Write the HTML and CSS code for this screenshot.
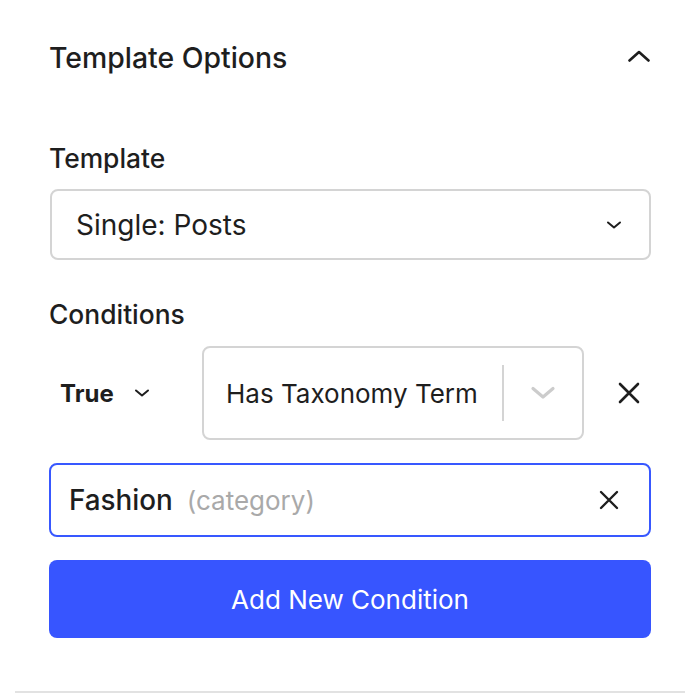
FILE: index.html
```html
<!DOCTYPE html>
<html lang="en">
<head>
<meta charset="utf-8">
<title>Template Options</title>
<link rel="stylesheet" href="styles.css">
</head>
<body>
<div class="panel">
  <div class="panel-header">
    <h2 class="panel-title">Template Options</h2>
    <svg class="chev-up" width="22" height="12" viewBox="0 0 22 12"><path d="M1.5 10.5 L11 2 L20.5 10.5" fill="none" stroke="#1e1e1e" stroke-width="2.6" stroke-linecap="round" stroke-linejoin="round"/></svg>
  </div>

  <div class="field-label label-template">Template</div>
  <div class="select">
    <span class="select-value">Single: Posts</span>
    <svg class="chev-small" width="16" height="10" viewBox="0 0 16 10"><path d="M2 2.5 L8 7.5 L14 2.5" fill="none" stroke="#1e1e1e" stroke-width="2" stroke-linecap="round" stroke-linejoin="round"/></svg>
  </div>

  <div class="field-label label-conditions">Conditions</div>
  <div class="cond-row">
    <div class="cond-bool">
      <span class="bool-text">True</span>
      <svg class="chev-small" width="16" height="10" viewBox="0 0 16 10"><path d="M2 2.5 L8 7.5 L14 2.5" fill="none" stroke="#1e1e1e" stroke-width="2" stroke-linecap="round" stroke-linejoin="round"/></svg>
    </div>
    <div class="cond-select">
      <span class="cond-value">Has Taxonomy Term</span>
      <span class="cond-sep"></span>
      <span class="cond-indicator">
        <svg width="26" height="16" viewBox="0 0 26 16"><path d="M3 3.5 L13 12 L23 3.5" fill="none" stroke="#cccccc" stroke-width="3.2" stroke-linecap="round" stroke-linejoin="round"/></svg>
      </span>
    </div>
    <svg class="cond-remove" width="22" height="22" viewBox="0 0 22 22"><path d="M2 2 L20 20 M20 2 L2 20" fill="none" stroke="#1e1e1e" stroke-width="2.6" stroke-linecap="round"/></svg>
  </div>

  <div class="term-input">
    <span class="term-name">Fashion</span>
    <span class="term-tax">(category)</span>
    <svg class="term-clear" width="20" height="20" viewBox="0 0 20 20"><path d="M2 2 L18 18 M18 2 L2 18" fill="none" stroke="#1e1e1e" stroke-width="2.4" stroke-linecap="round"/></svg>
  </div>

  <button class="add-btn">Add New Condition</button>
</div>
</body>
</html>
```

FILE: styles.css
```css
* { box-sizing: border-box; }

html, body {
  margin: 0;
  padding: 0;
  background: #ffffff;
}

body {
  font-family: Inter, "Noto Sans", "Liberation Sans", sans-serif;
  color: #1e1e1e;
}

.panel {
  margin: 0 15px;
  padding: 40px 34px 53px 34px;
  border-bottom: 2px solid #e2e2e2;
  display: flex;
  flex-direction: column;
}

.panel-header {
  display: flex;
  align-items: center;
  justify-content: space-between;
  height: 36px;
}

.panel-title {
  margin: 0;
  font-size: 28.4px;
  line-height: 36px;
  font-weight: 500;
  letter-spacing: 0;
}

.chev-up {
  margin-right: 1px;
  margin-top: -5px;
}

.field-label {
  font-size: 26.4px;
  line-height: 28px;
  font-weight: 500;
}

.label-template { margin-top: 68px; }
.label-conditions { margin-top: 40px; }

.select {
  margin-top: 17px;
  height: 71px;
  border: 2px solid #d4d4d4;
  border-radius: 8px;
  display: flex;
  align-items: center;
  justify-content: space-between;
  padding: 0 27px 0 24px;
  margin-left: 1px;
}

.select-value {
  font-size: 28px;
  font-weight: 400;
}

.cond-row {
  margin-top: 18px;
  height: 94px;
  display: flex;
  align-items: center;
}

.cond-bool {
  width: 153px;
  padding-left: 11px;
  display: flex;
  align-items: center;
  gap: 20px;
}

.bool-text {
  font-size: 24px;
  font-weight: 700;
}

.cond-select {
  width: 382px;
  height: 94px;
  border: 2px solid #d4d4d4;
  border-radius: 8px;
  display: flex;
  align-items: center;
  padding-left: 22px;
}

.cond-value {
  font-size: 26px;
  flex: 1;
  white-space: nowrap;
}

.cond-sep {
  width: 2px;
  height: 56px;
  background: #d4d4d4;
}

.cond-indicator {
  width: 78px;
  display: flex;
  justify-content: center;
  align-items: center;
}

.cond-remove {
  margin-left: auto;
  margin-right: 11px;
}

.term-input {
  margin-top: 23px;
  height: 74px;
  border: 2px solid #3858ff;
  border-radius: 8px;
  display: flex;
  align-items: center;
  padding: 0 30px 0 18px;
}

.term-name {
  font-size: 27.8px;
  font-weight: 500;
}

.term-tax {
  font-size: 26px;
  color: #a9a9a9;
  margin-left: 14px;
}

.term-clear {
  margin-left: auto;
}

.add-btn {
  margin-top: 23px;
  height: 78px;
  border: none;
  border-radius: 8px;
  background: #3755ff;
  color: #ffffff;
  font-family: Inter, "Noto Sans", "Liberation Sans", sans-serif;
  font-size: 26px;
  font-weight: 400;
  cursor: pointer;
}
```
